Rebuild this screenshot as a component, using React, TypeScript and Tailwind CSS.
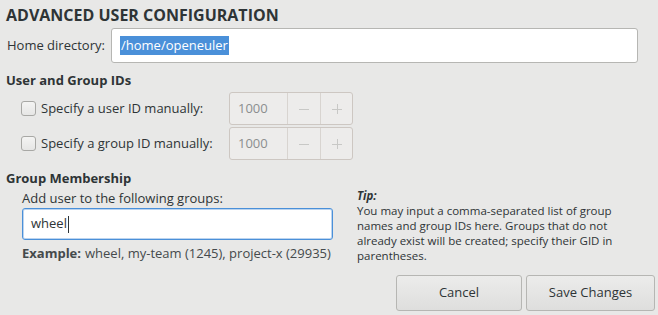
import React from "react";

function SpinBox() {
  return (
    <div className="flex h-[33px] w-[124px] rounded-[3px] border border-[#cdc7c2] bg-[#edeceb] text-[13px] text-[#8b8e8f]">
      <div className="flex w-[57px] items-center pl-[8px]">1000</div>
      <div className="flex w-[33px] items-center justify-center border-l border-[#d8d4d0]">
        <svg width="10" height="10" viewBox="0 0 10 10"><path d="M0 5.5h10" stroke="#c8c8c6" strokeWidth="1" /></svg>
      </div>
      <div className="flex flex-1 items-center justify-center border-l border-[#d8d4d0]">
        <svg width="10" height="10" viewBox="0 0 10 10"><path d="M0 5.5h10M5.5 0v10" stroke="#c8c8c6" strokeWidth="1" /></svg>
      </div>
    </div>
  );
}

function CheckRow({ label }: { label: string }) {
  return (
    <div className="flex items-center">
      <div className="ml-[21px] flex w-[208px] items-center">
        <span className="mr-[5px] h-[15px] w-[15px] rounded-[3px] border border-[#a8a8a5] bg-gradient-to-b from-[#f4f4f3] to-[#e6e6e5]" />
        <span>{label}</span>
      </div>
      <SpinBox />
    </div>
  );
}

export default function App() {
  return (
    <div
      className="flex h-[315px] w-[658px] flex-col bg-[#e8e8e7] text-[13px] text-[#2e3436]"
      style={{ fontFamily: '"Open Sans", "Noto Sans", sans-serif' }}
    >
      <h1 className="ml-[6px] mt-[4px] h-[22px] text-[16px] font-bold leading-[22px]">
        ADVANCED USER CONFIGURATION
      </h1>

      <div className="mt-[2px] flex items-center">
        <label className="ml-[7px] w-[104px]">Home directory:</label>
        <div className="flex h-[35px] w-[527px] items-center rounded-[3px] border border-[#b6b6b3] bg-white pl-[8px]">
          <span className="bg-[#4a90d9] px-[1px] leading-[19px] text-white">/home/openeuler</span>
        </div>
      </div>

      <div className="ml-[6px] mt-[8px] font-bold leading-[18px]">User and Group IDs</div>

      <div className="mt-[3px] flex flex-col gap-[2px]">
        <CheckRow label="Specify a user ID manually:" />
        <CheckRow label="Specify a group ID manually:" />
      </div>

      <div className="ml-[6px] mt-[9px] font-bold leading-[18px]">Group Membership</div>

      <div className="flex">
        <div className="ml-[22px] w-[311px]">
          <div className="mt-[2px] leading-[18px]">Add user to the following groups:</div>
          <div className="mt-[1px] flex h-[32px] items-center rounded-[3px] border border-[#4a90d9] bg-white pl-[8px] shadow-[inset_0_0_0_1px_#bcd4ef]">
            <span>wheel</span>
            <span className="ml-[1px] h-[17px] w-[1px] bg-[#2e3436]" />
          </div>
          <div className="mt-[4px] leading-[18px] text-[#454a4c]">
            <span className="font-bold">Example:</span>
            <span className="ml-[4px]">wheel, my-team (1245), project-x (29935)</span>
          </div>
        </div>
        <div className="ml-[24px] mt-[1px] w-[290px] text-[11.5px] leading-[15px]">
          <div className="font-bold italic">Tip:</div>
          <div>
            You may input a comma-separated list of group names and group IDs here. Groups that do not already exist will be
            created; specify their GID in parentheses.
          </div>
        </div>
      </div>

      <div className="mt-auto mb-[4px] mr-[3px] flex justify-end gap-[4px]">
        <button className="h-[36px] w-[126px] rounded-[3px] border border-[#b6b6b3] bg-gradient-to-b from-[#ececeb] to-[#dededd] text-[13px] text-[#2e3436]">
          Cancel
        </button>
        <button className="h-[36px] w-[129px] rounded-[3px] border border-[#b6b6b3] bg-gradient-to-b from-[#ececeb] to-[#dededd] text-[13px] text-[#2e3436]">
          Save Changes
        </button>
      </div>
    </div>
  );
}
